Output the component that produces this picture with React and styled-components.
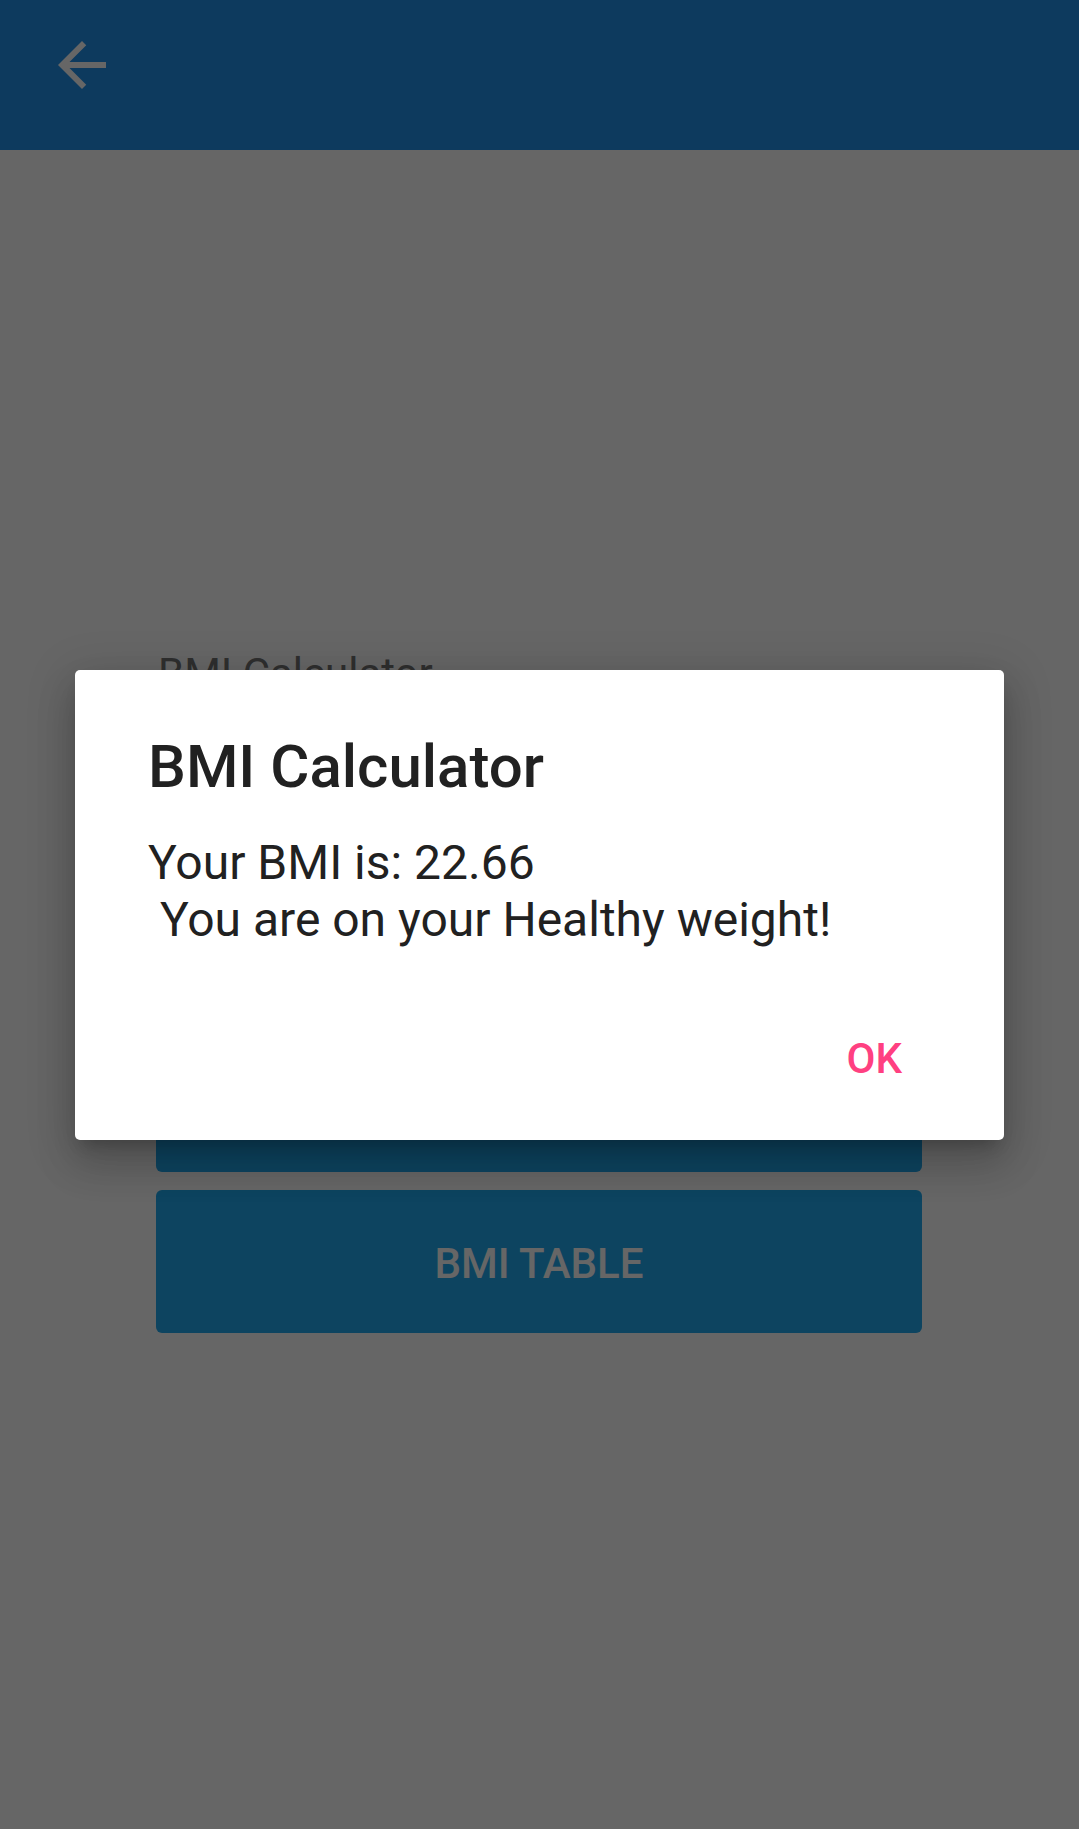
import React from 'react';
import styled, { createGlobalStyle } from 'styled-components';

const GlobalStyle = createGlobalStyle`
  html, body {
    margin: 0;
    padding: 0;
    height: 1829px;
    background: #ffffff;
    font-family: Roboto, 'Noto Sans', sans-serif;
  }
  * { box-sizing: border-box; }
`;

const Screen = styled.div`
  position: relative;
  width: 1079px;
  height: 1829px;
  background: #ffffff;
  overflow: hidden;
`;

const AppBar = styled.header`
  height: 150px;
  background: #2191eb;
  display: flex;
  align-items: flex-start;
  padding: 29px 0 0 46px;
`;

const BackIcon = styled.svg`
  width: 72px;
  height: 72px;
  fill: #ffffff;
`;

const Content = styled.main`
  display: flex;
  flex-direction: column;
  padding: 0 157px 0 156px;
`;

const Label = styled.div`
  margin-top: 495px;
  margin-left: 2px;
  font-size: 42px;
  line-height: 57px;
  color: #757575;
`;

const Inputs = styled.div`
  height: 327px;
`;

const Buttons = styled.div`
  display: flex;
  flex-direction: column;
  gap: 18px;
`;

const ActionButton = styled.button`
  height: 143px;
  padding-top: 5px;
  border: 0;
  border-radius: 6px;
  background: #21aaf0;
  color: #ffffff;
  font-family: Roboto, sans-serif;
  font-weight: 500;
  font-size: 42px;
  text-transform: uppercase;
`;

const Scrim = styled.div`
  position: absolute;
  inset: 0;
  background: rgba(0, 0, 0, 0.6);
  display: flex;
  justify-content: center;
  align-items: flex-start;
  padding-top: 670px;
`;

const Dialog = styled.div`
  width: 929px;
  height: 470px;
  background: #ffffff;
  border-radius: 5px;
  padding: 62px 72px 0 73px;
  display: flex;
  flex-direction: column;
  box-shadow: 0 24px 38px 3px rgba(0, 0, 0, 0.14),
    0 9px 46px 8px rgba(0, 0, 0, 0.12),
    0 11px 15px -7px rgba(0, 0, 0, 0.2);
`;

const Title = styled.h2`
  margin: 0;
  font-size: 60px;
  line-height: 70px;
  font-weight: 500;
  color: #212121;
`;

const Message = styled.p`
  margin: 32px 0 0;
  font-size: 48px;
  line-height: 57px;
  color: #212121;
  white-space: pre;
`;

const DialogActions = styled.div`
  margin-top: 56px;
  display: flex;
  justify-content: flex-end;
  padding-right: 6px;
`;

const TextButton = styled.button`
  height: 108px;
  padding: 0 24px;
  border: 0;
  background: transparent;
  font-family: Roboto, sans-serif;
  font-weight: 500;
  font-size: 42px;
  line-height: 49px;
  color: #ff4081;
`;

export default function App() {
  return (
    <>
      <GlobalStyle />
      <Screen>
        <AppBar>
          <BackIcon viewBox="0 0 24 24">
            <path d="M20 11H7.83l5.59-5.59L12 4l-8 8 8 8 1.41-1.41L7.83 13H20v-2z" />
          </BackIcon>
        </AppBar>
        <Content>
          <Label>BMI Calculator</Label>
          <Inputs />
          <Buttons>
            <ActionButton>Calculate</ActionButton>
            <ActionButton>BMI Table</ActionButton>
          </Buttons>
        </Content>
        <Scrim>
          <Dialog>
            <Title>BMI Calculator</Title>
            <Message>{'Your BMI is: 22.66\n You are on your Healthy weight!'}</Message>
            <DialogActions>
              <TextButton>OK</TextButton>
            </DialogActions>
          </Dialog>
        </Scrim>
      </Screen>
    </>
  );
}
